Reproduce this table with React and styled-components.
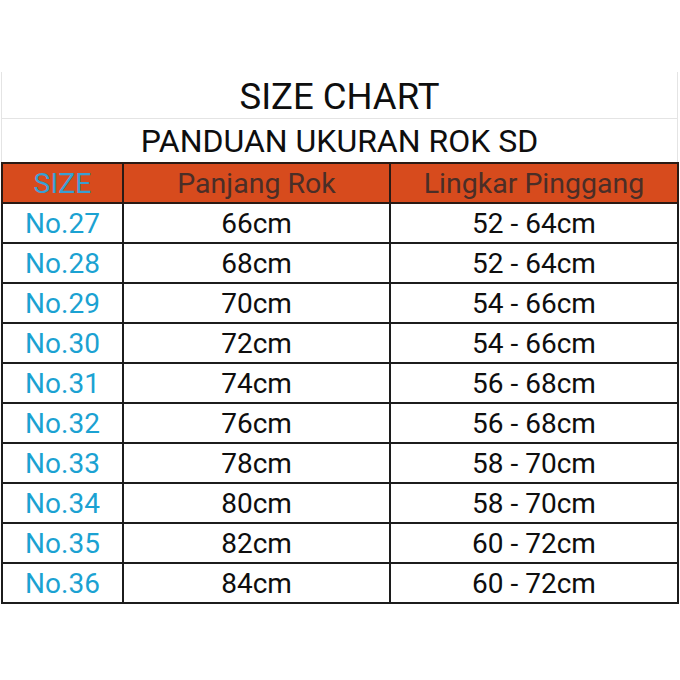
import React from 'react';
import styled, { createGlobalStyle } from 'styled-components';

const GlobalStyle = createGlobalStyle`
    html, body {
        margin: 0;
        padding: 0;
        background: #ffffff;
    }
    body {
        font-family: Roboto, "Liberation Sans", Arial, sans-serif;
        color: #111111;
    }
`;

const Page = styled.div`
    width: 680px;
    height: 680px;
    padding-top: 72px;
    box-sizing: border-box;
`;

const Chart = styled.div`
    margin-left: 1px;
    width: 677px;
    display: flex;
    flex-direction: column;
`;

const TitleBox = styled.div`
    border-left: 1px solid #e4e4e4;
    border-right: 1px solid #e4e4e4;
    display: flex;
    flex-direction: column;
`;

const Title = styled.div`
    height: 47px;
    display: flex;
    align-items: center;
    justify-content: center;
    font-size: 36.5px;
    color: #0e0e0e;
    border-bottom: 1px solid #e4e4e4;
    padding-top: 2px;
    box-sizing: border-box;
`;

const SubTitle = styled.div`
    height: 44px;
    display: flex;
    align-items: center;
    justify-content: center;
    font-size: 32px;
    color: #0e0e0e;
`;

const Table = styled.table`
    width: 676px;
    border-collapse: collapse;
    table-layout: fixed;
    margin-top: -1px;
`;

const Row = styled.tr`
    height: 40px;
`;

const HeadCell = styled.th`
    background: #d74b1d;
    border: 2px solid #2a1a14;
    font-weight: 400;
    font-size: 28.5px;
    padding: 0;
    color: ${({ $accent }) => ($accent ? '#3a9fd2' : '#4a2e27')};
`;

const Cell = styled.td`
    border: 2px solid #1c1c1c;
    text-align: center;
    font-size: 28px;
    padding: 0;
    color: ${({ $accent }) => ($accent ? '#1ba2d2' : '#0e0e0e')};
`;

const sizes = [
    { no: 'No.27', length: '66cm', waist: '52 - 64cm' },
    { no: 'No.28', length: '68cm', waist: '52 - 64cm' },
    { no: 'No.29', length: '70cm', waist: '54 - 66cm' },
    { no: 'No.30', length: '72cm', waist: '54 - 66cm' },
    { no: 'No.31', length: '74cm', waist: '56 - 68cm' },
    { no: 'No.32', length: '76cm', waist: '56 - 68cm' },
    { no: 'No.33', length: '78cm', waist: '58 - 70cm' },
    { no: 'No.34', length: '80cm', waist: '58 - 70cm' },
    { no: 'No.35', length: '82cm', waist: '60 - 72cm' },
    { no: 'No.36', length: '84cm', waist: '60 - 72cm' },
];

const App = () => {
    return (
        <Page>
            <GlobalStyle />
            <Chart>
                <TitleBox>
                    <Title>SIZE CHART</Title>
                    <SubTitle>PANDUAN UKURAN ROK SD</SubTitle>
                </TitleBox>
                <Table>
                    <colgroup>
                        <col style={{ width: '121px' }} />
                        <col style={{ width: '267px' }} />
                        <col style={{ width: '288px' }} />
                    </colgroup>
                    <thead>
                        <Row>
                            <HeadCell $accent>SIZE</HeadCell>
                            <HeadCell>Panjang Rok</HeadCell>
                            <HeadCell>Lingkar Pinggang</HeadCell>
                        </Row>
                    </thead>
                    <tbody>
                        {sizes.map((s) => (
                            <Row key={s.no}>
                                <Cell $accent>{s.no}</Cell>
                                <Cell>{s.length}</Cell>
                                <Cell>{s.waist}</Cell>
                            </Row>
                        ))}
                    </tbody>
                </Table>
            </Chart>
        </Page>
    );
};

export default App;
